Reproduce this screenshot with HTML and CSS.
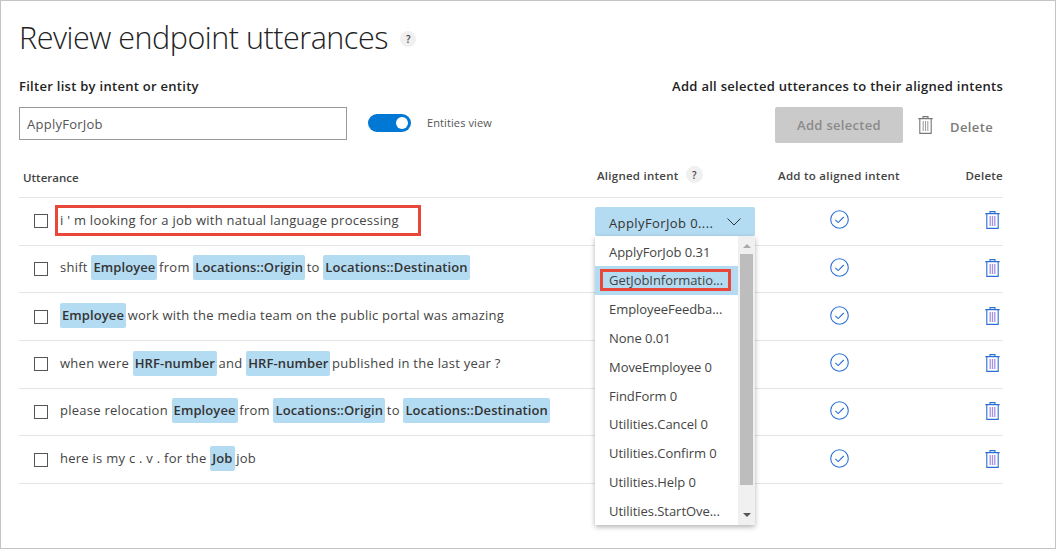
FILE: index.html
```html
<!DOCTYPE html>
<html lang="en">
<head>
<meta charset="utf-8">
<title>Review endpoint utterances</title>
<link rel="stylesheet" href="styles.css">
</head>
<body>
<svg class="defs" width="0" height="0" aria-hidden="true">
  <symbol id="trash" viewBox="0 0 15 18">
    <path d="M5 2.500V.6h5v1.900M.3 2.600h14.400M1.800 2.600v14.800h11.400V2.600" fill="none" stroke="currentColor" stroke-width="1.100"/>
    <path d="M5.200 5v10M7.500 5v10M9.800 5v10" fill="none" stroke="#7f6fd8" stroke-width="1.300" opacity=".75"/>
  </symbol>
  <symbol id="trash-grey" viewBox="0 0 15 18">
    <path d="M5 2.500V.6h5v1.900M.3 2.600h14.400M1.800 2.600v14.800h11.400V2.600" fill="none" stroke="currentColor" stroke-width="1.100"/>
    <path d="M5.200 5v10M7.500 5v10M9.800 5v10" fill="none" stroke="currentColor" stroke-width="1.100" opacity=".7"/>
  </symbol>
  <symbol id="check" viewBox="0 0 19 19">
    <circle cx="9.500" cy="9.500" r="8.800" fill="none" stroke="currentColor" stroke-width="1.100"/>
    <path d="M5.300 9.900l2.900 2.700 5.500-5.600" fill="none" stroke="currentColor" stroke-width="1.100"/>
  </symbol>
</svg>
<main class="page">
  <h1 class="title">Review endpoint utterances <span class="help help-title">?</span></h1>
  <section class="toolbar">
    <div class="filter">
      <label class="strong-label">Filter list by intent or entity</label>
      <div class="filter-row">
        <div class="input">ApplyForJob</div>
        <span class="toggle"><span class="knob"></span></span>
        <span class="toggle-label">Entities view</span>
      </div>
    </div>
    <div class="bulk">
      <div class="strong-label">Add all selected utterances to their aligned intents</div>
      <div class="bulk-row">
        <button class="add-selected">Add selected</button>
        <svg class="bulk-trash"><use href="#trash-grey"/></svg>
        <span class="bulk-delete">Delete</span>
      </div>
    </div>
  </section>
  <section class="table">
    <div class="row head">
      <div class="h-utt">Utterance</div>
      <div class="h-int">Aligned intent <span class="help help-col">?</span></div>
      <div class="c">Add to aligned intent</div>
      <div class="d">Delete</div>
    </div>
    <div class="row">
      <div class="utt"><span class="box"></span><span class="text flagged">i ' m looking for a job with natual language processing</span></div>
      <div class="int"><div class="select"><span class="select-value">ApplyForJob 0....</span><svg class="chev" viewBox="0 0 14 8"><path d="M.5.5L7 7l6.500-6.500" fill="none" stroke="currentColor"/></svg></div></div>
      <div class="c"><svg class="ok"><use href="#check"/></svg></div>
      <div class="d"><svg class="bin"><use href="#trash"/></svg></div>
    </div>
    <div class="row">
      <div class="utt"><span class="box"></span><span class="text">shift <b>Employee</b> from <b>Locations::Origin</b> to <b>Locations::Destination</b></span></div>
      <div class="int"></div>
      <div class="c"><svg class="ok"><use href="#check"/></svg></div>
      <div class="d"><svg class="bin"><use href="#trash"/></svg></div>
    </div>
    <div class="row">
      <div class="utt"><span class="box"></span><span class="text"><b>Employee</b> work with the media team on the public portal was amazing</span></div>
      <div class="int"></div>
      <div class="c"><svg class="ok"><use href="#check"/></svg></div>
      <div class="d"><svg class="bin"><use href="#trash"/></svg></div>
    </div>
    <div class="row">
      <div class="utt"><span class="box"></span><span class="text">when were <b>HRF-number</b> and <b>HRF-number</b> published in the last year ?</span></div>
      <div class="int"></div>
      <div class="c"><svg class="ok"><use href="#check"/></svg></div>
      <div class="d"><svg class="bin"><use href="#trash"/></svg></div>
    </div>
    <div class="row">
      <div class="utt"><span class="box"></span><span class="text">please relocation <b>Employee</b> from <b>Locations::Origin</b> to <b>Locations::Destination</b></span></div>
      <div class="int"></div>
      <div class="c"><svg class="ok"><use href="#check"/></svg></div>
      <div class="d"><svg class="bin"><use href="#trash"/></svg></div>
    </div>
    <div class="row">
      <div class="utt"><span class="box"></span><span class="text">here is my c . v . for the <b>Job</b> job</span></div>
      <div class="int"></div>
      <div class="c"><svg class="ok"><use href="#check"/></svg></div>
      <div class="d"><svg class="bin"><use href="#trash"/></svg></div>
    </div>
  </section>
  <div class="menu">
    <ul class="options">
      <li>ApplyForJob 0.31</li>
      <li class="picked"><span>GetJobInformatio...</span></li>
      <li>EmployeeFeedba...</li>
      <li>None 0.01</li>
      <li>MoveEmployee 0</li>
      <li>FindForm 0</li>
      <li>Utilities.Cancel 0</li>
      <li>Utilities.Confirm 0</li>
      <li>Utilities.Help 0</li>
      <li>Utilities.StartOve...</li>
    </ul>
    <div class="scroll"><i class="up"></i><div class="thumb"></div><i class="down"></i></div>
  </div>
</main>
</body>
</html>
```
FILE: styles.css
```css
* { box-sizing: border-box; }
html, body { margin: 0; height: 100%; }
body { font-family: "Open Sans", "Noto Sans", sans-serif; color: #333; background: #fff; overflow: hidden; }
.defs { position: absolute; }
.page { position: relative; width: 1056px; height: 549px; border: 1px solid #c4c4c4; padding: 16px 52px 0 18px; }
.title { margin: 0; height: 44px; font-size: 30.5px; line-height: 40px; font-weight: 300; letter-spacing: -.47px; color: #222; white-space: nowrap; }
.help { display: inline-flex; align-items: center; justify-content: center; border-radius: 50%; background: #f0f0f0; font-weight: 600; color: #444; letter-spacing: 0; }
.help-title { width: 16px; height: 16px; font-size: 10px; vertical-align: 6px; margin-left: 5px; }
.help-col { width: 17px; height: 17px; font-size: 10px; margin-left: 4px; vertical-align: 1px; }
.toolbar { display: flex; justify-content: space-between; margin-top: 16px; height: 89px; }
.strong-label { font-size: 13px; font-weight: 600; letter-spacing: .28px; color: #222; line-height: 18px; display: block; }
.filter-row { display: flex; align-items: center; margin-top: 12px; }
.input { width: 328px; height: 33px; border: 1px solid #999; padding-left: 7px; font-size: 13px; letter-spacing: .25px; line-height: 33px; color: #555; }
.toggle { margin-left: 21px; width: 43px; height: 18px; border-radius: 9px; background: #0078d4; position: relative; margin-top: -1px; }
.knob { position: absolute; right: 3px; top: 3px; width: 12px; height: 12px; border-radius: 50%; background: #fff; }
.toggle-label { margin-left: 16px; font-size: 11px; letter-spacing: .1px; color: #555; margin-top: -3px; }
.bulk { width: 333px; text-align: right; }
.bulk-row { display: flex; align-items: center; margin-top: 12px; padding-left: 105px; }
.add-selected { width: 128px; height: 36px; border: 0; border-radius: 2px; background: #cacaca; color: #8a8a8a; font: 600 13px "Open Sans", sans-serif; letter-spacing: .3px; padding: 0; }
.bulk-trash { width: 15px; height: 18px; margin-left: 15px; color: #777; }
.bulk-delete { margin-left: 17px; font-size: 13px; letter-spacing: .4px; font-weight: 600; color: #7a7a7a; margin-top: 3px; }
.row { display: grid; grid-template-columns: 576px 160px 168px 80px; height: 47.67px; border-bottom: 1px solid #e4e4e4; align-items: center; }
.head { height: 32px; padding-bottom: 15px; font-size: 11.5px; letter-spacing: .25px; font-weight: 600; color: #444; }
.h-utt { padding: 4px 0 0 4px; letter-spacing: 0; }
.h-int { padding-left: 2px; margin-bottom: 2px; }
.c { text-align: center; }
.d { text-align: right; }
.row:not(.head) .d { padding-right: 3px; }
.utt { display: flex; align-items: center; }
.box { width: 14px; height: 14px; border: 1px solid #555; margin-left: 15px; margin-right: 12px; flex: none; }
.text { font-size: 13px; letter-spacing: .26px; color: #444; line-height: 25px; white-space: nowrap; margin-bottom: 2px; }
.text b { display: inline-block; background: #b3dbf2; border-radius: 2px; padding: 0 2px; margin-right: -2px; font-weight: 600; letter-spacing: .1px; color: #333; }
.flagged { outline: 3px solid #e8473a; padding: 0 19px 0 2px; margin-left: -2px; }
.int { position: relative; height: 100%; }
.select { position: absolute; top: 9px; left: 0; width: 160px; height: 29px; background: #b3dbf2; border-radius: 2px; display: flex; align-items: center; justify-content: space-between; padding: 0 14px; font-size: 13px; letter-spacing: .4px; color: #333; }
.select-value { margin-top: 2px; }
.chev { width: 14px; height: 8px; color: #333; }
.ok { width: 19px; height: 19px; color: #2b6fd6; display: block; margin: 0 auto 3px; }
.bin { width: 15px; height: 18px; color: #2b6fd6; display: block; margin: 0 0 2px auto; }
.menu { position: absolute; left: 594px; top: 235px; width: 160px; height: 289px; background: #fff; box-shadow: 0 2px 5px rgba(0,0,0,.3); display: flex; }
.options { list-style: none; margin: 0; padding: 1.6px 0 0; width: 143px; }
.options li { height: 28.8px; line-height: 28.8px; padding-left: 14px; font-size: 13px; letter-spacing: -.05px; color: #444; white-space: nowrap; }
.options .picked { background: #b3dbf2; padding-left: 5px; }
.picked span { display: block; border: 3px solid #e8473a; height: 22px; line-height: 16px; padding-left: 6px; width: 131px; position: relative; top: 3px; }
.scroll { width: 17px; background: #f0f0f0; display: flex; flex-direction: column; align-items: center; }
.thumb { width: 13px; height: 231px; background: #bdbdbd; }
.up, .down { width: 0; height: 0; border-left: 4px solid transparent; border-right: 4px solid transparent; display: block; }
.up { border-bottom: 4px solid #aaa; margin: 8px 0 6px; }
.down { border-top: 4px solid #555; margin-top: 28px; }
```
